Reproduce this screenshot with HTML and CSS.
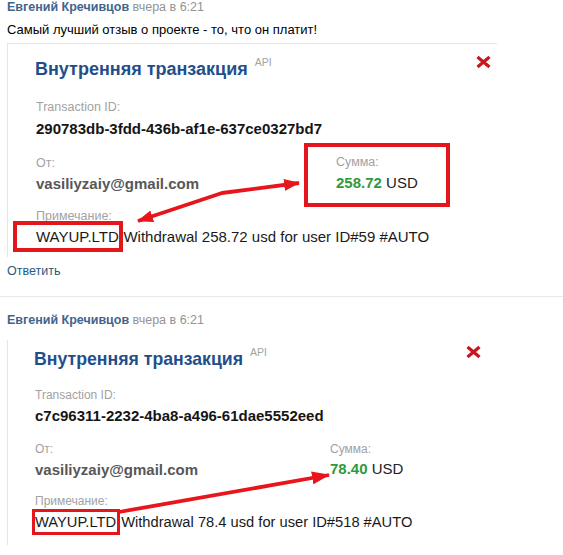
FILE: index.html
```html
<!DOCTYPE html>
<html lang="ru">
<head>
<meta charset="utf-8">
<title>Отзывы</title>
<link rel="stylesheet" href="styles.css">
</head>
<body>
<div class="feed">
  <article class="post">
    <div class="post-head"><span class="author">Евгений Кречивцов</span> <span class="time">вчера в 6:21</span></div>
    <p class="post-text">Самый лучший отзыв о проекте - то, что он платит!</p>
    <div class="shot shot--one">
      <div class="title-row">
        <h2 class="shot-title">Внутренняя транзакция</h2>
        <span class="api">API</span>
        <svg class="close" width="17" height="14" viewBox="0 0 17 14"><path d="M2.5 2 L14.5 12 M14.5 2 L2.5 12"/></svg>
      </div>
      <div class="label label-tx">Transaction ID:</div>
      <div class="tx-id">290783db-3fdd-436b-af1e-637ce0327bd7</div>
      <div class="pay-row">
        <div class="col-from">
          <div class="label">От:</div>
          <div class="email">vasiliyzaiy@gmail.com</div>
        </div>
        <div class="col-sum boxed">
          <div class="label">Сумма:</div>
          <div class="sum"><b>258.72</b> USD</div>
        </div>
      </div>
      <div class="label label-note">Примечание:</div>
      <div class="note"><span class="mark">WAYUP.LTD</span> Withdrawal 258.72 usd for user ID#59 #AUTO</div>
      <svg class="arrows" width="490" height="214" viewBox="0 0 490 214">
        <defs>
          <marker id="head1" markerUnits="userSpaceOnUse" markerWidth="16" markerHeight="12" refX="15" refY="6" orient="auto-start-reverse">
            <path d="M0 0 L16 6 L0 12 Z" fill="#e8161c"/>
          </marker>
        </defs>
        <polyline points="131,178 215,150 292,140" marker-start="url(#head1)" marker-end="url(#head1)"/>
      </svg>
    </div>
    <div class="reply">Ответить</div>
  </article>
  <hr class="sep">
  <article class="post">
    <div class="post-head post-head--second"><span class="author">Евгений Кречивцов</span> <span class="time">вчера в 6:21</span></div>
    <div class="shot shot--two">
      <div class="title-row">
        <h2 class="shot-title">Внутренняя транзакция</h2>
        <span class="api">API</span>
        <svg class="close" width="17" height="14" viewBox="0 0 17 14"><path d="M2.5 2 L14.5 12 M14.5 2 L2.5 12"/></svg>
      </div>
      <div class="label label-tx">Transaction ID:</div>
      <div class="tx-id">c7c96311-2232-4ba8-a496-61dae5552eed</div>
      <div class="pay-row">
        <div class="col-from">
          <div class="label">От:</div>
          <div class="email">vasiliyzaiy@gmail.com</div>
        </div>
        <div class="col-sum">
          <div class="label">Сумма:</div>
          <div class="sum"><b>78.40</b> USD</div>
        </div>
      </div>
      <div class="label label-note">Примечание:</div>
      <div class="note"><span class="mark mark--thin">WAYUP.LTD</span> Withdrawal 78.4 usd for user ID#518 #AUTO</div>
      <svg class="arrows" width="490" height="205" viewBox="0 0 490 205">
        <defs>
          <marker id="head2" markerUnits="userSpaceOnUse" markerWidth="18" markerHeight="13" refX="17" refY="6.5" orient="auto">
            <path d="M0 0 L18 6.5 L0 13 Z" fill="#e8161c"/>
          </marker>
        </defs>
        <polyline points="112,172 322,135" marker-end="url(#head2)"/>
      </svg>
    </div>
  </article>
</div>
</body>
</html>
```

FILE: styles.css
```css
* { box-sizing: border-box; }

body {
  margin: 0;
  background: #fff;
  color: #000;
  font-family: "Liberation Sans", Arial, sans-serif;
}

.feed { width: 563px; }

.post { padding-left: 7px; }

.post-head {
  font-size: 12.5px;
  line-height: 15px;
}
.post-head--second { margin-top: 16px; }

.author { font-weight: bold; color: #42648b; }
.time { color: #939393; }

.post-text {
  margin: 7px 0 0;
  font-size: 13px;
  line-height: 15px;
}

.reply {
  margin-top: 7px;
  font-size: 12.5px;
  line-height: 15px;
  color: #2a5885;
}

.sep {
  margin: 17px 0 0;
  border: 0;
  border-top: 1px solid #e7e8ec;
  height: 0;
}

/* transaction screenshot */
.shot {
  position: relative;
  width: 490px;
  border-left: 1px solid #e6e6e6;
}
.shot--one {
  margin-top: 6px;
  border-top: 1px solid #e6e6e6;
  padding: 14px 0 11px 28px;
}
.shot--two {
  margin-top: 12px;
  padding: 7.5px 0 14px 27px;
}

.title-row {
  display: flex;
  align-items: flex-start;
  height: 22px;
}
.shot-title {
  margin: 0 0 0 -1px;
  font-size: 18px;
  line-height: 22px;
  font-weight: bold;
  color: #1f4f8a;
}
.shot--two .shot-title { font-size: 17.7px; }

.api {
  margin: -2px 0 0 7px;
  font-size: 10.5px;
  line-height: 12px;
  color: #a3a3a3;
}
.close {
  margin: -3px 5px 0 auto;
  fill: none;
  stroke: #c8161e;
  stroke-width: 3.2;
}
.shot--two .close { margin: -2.5px 15px 0 auto; }

.label {
  font-size: 12.5px;
  line-height: 15px;
  color: #a2a2a2;
}
.shot--two .label { font-size: 12px; }

.label-tx { margin-top: 20px; }
.shot--two .label-tx { margin-top: 18.5px; }

.tx-id {
  margin-top: 5px;
  font-size: 15px;
  line-height: 18px;
  font-weight: bold;
  color: #151515;
}
.shot--two .tx-id { margin-top: 4.4px; }

.pay-row {
  display: flex;
  align-items: flex-start;
  margin-top: 5px;
}
.shot--two .pay-row { margin-top: 16.6px; }

.col-from {
  flex: none;
  width: 268px;
  padding-top: 13px;
}
.shot--two .col-from { width: 295px; padding-top: 0; }

.email {
  margin-top: 4px;
  font-size: 15px;
  line-height: 18px;
  font-weight: bold;
  color: #575757;
}
.shot--two .email { margin-top: 4.4px; }

.col-sum { flex: none; }
.boxed {
  width: 146px;
  height: 64px;
  border: 4px solid #e3161c;
  padding: 8px 0 0 28px;
}

.sum {
  margin-top: 4px;
  font-size: 15px;
  line-height: 18px;
  color: #222;
}
.sum b { color: #2f9a3b; }
.shot--two .sum { margin-top: 3px; }

.label-note { margin-top: 2px; }
.shot--two .label-note { margin-top: 14.6px; }

.note {
  margin-top: 4px;
  font-size: 15px;
  line-height: 18px;
  color: #1a1a1a;
  white-space: nowrap;
}
.shot--two .note { font-size: 14.7px; }

.mark {
  padding: 3px 0.5px 3px 19px;
  margin-left: -19px;
  outline: 4px solid #e3161c;
}
.mark--thin {
  padding: 2px 1px 2px 0;
  margin-left: 0;
  outline-width: 3px;
}

.arrows {
  position: absolute;
  left: -1px;
  top: -1px;
  pointer-events: none;
}
.shot--two .arrows { top: 0; }
.arrows polyline {
  fill: none;
  stroke: #e8161c;
  stroke-width: 3.8;
  stroke-linejoin: round;
}
```
